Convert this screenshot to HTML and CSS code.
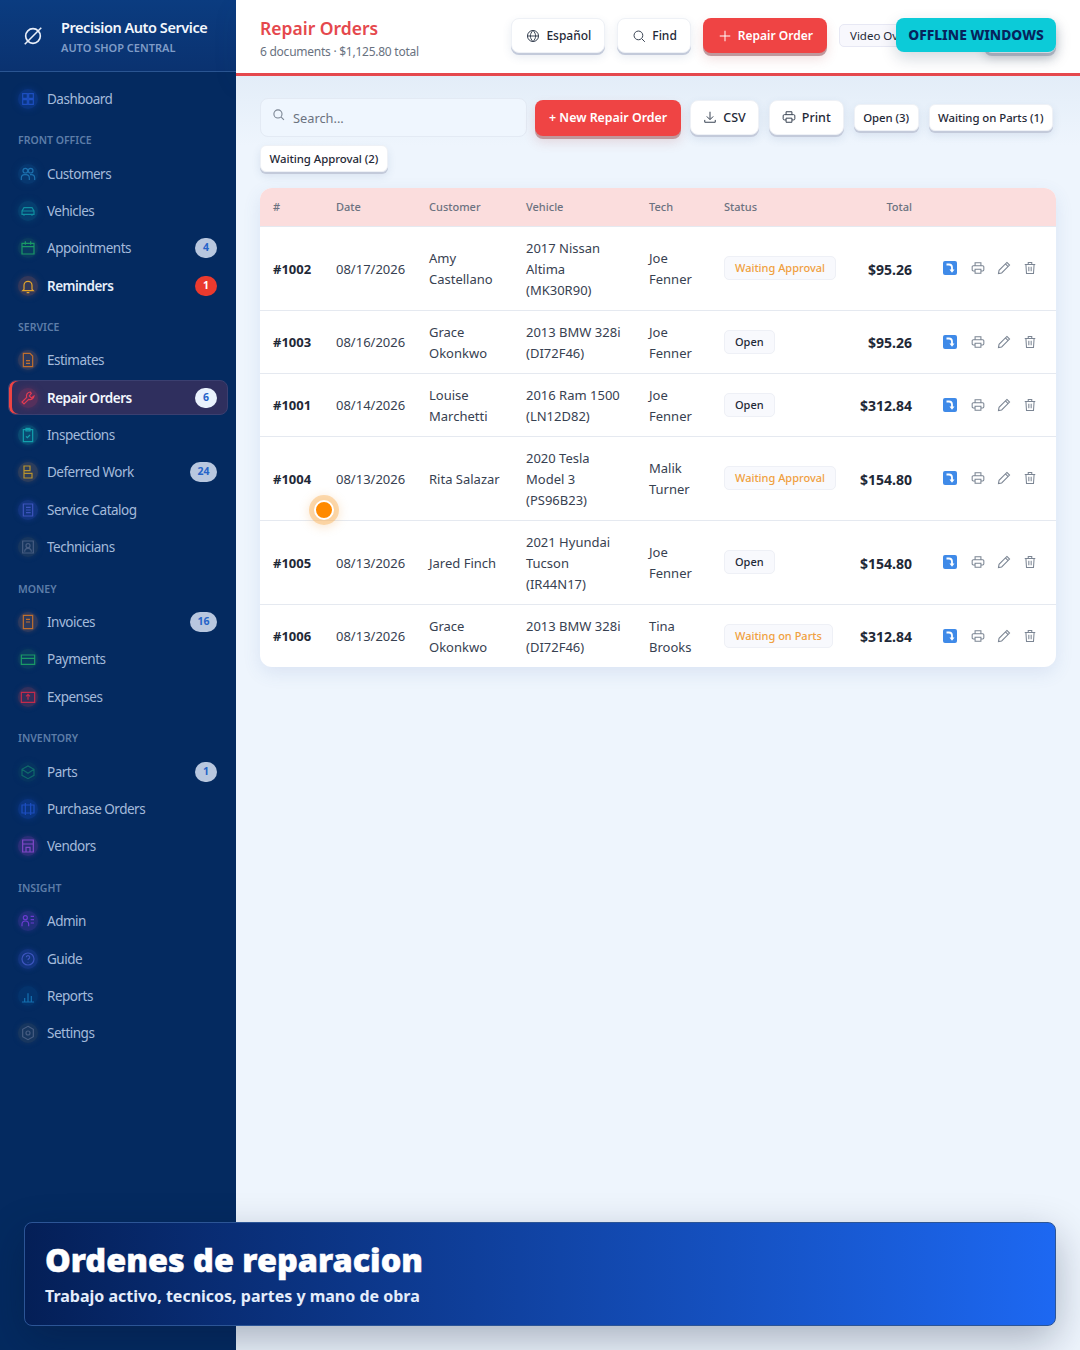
FILE: index.html
```html
<!DOCTYPE html>
<html lang="en">
<head>
  <meta charset="UTF-8">
  <title>Repair Orders</title>
  <link rel="stylesheet" href="styles.css">
</head>
<body>

  <svg class="defs" width="0" height="0">
    <symbol id="i-print" viewBox="0 0 24 24"><path d="M7 8V3h10v5M7 17H4a2 2 0 0 1-2-2v-5a2 2 0 0 1 2-2h16a2 2 0 0 1 2 2v5a2 2 0 0 1-2 2h-3M7 14h10v7H7z"/></symbol>
    <symbol id="i-pencil" viewBox="0 0 24 24"><path d="M17 2.500l4.500 4.500L8 20.500l-5.500 1 1-5.500zM14.500 5l4.500 4.500"/></symbol>
    <symbol id="i-trash" viewBox="0 0 24 24"><path d="M3 6h18M9 6V2.500h6V6M5 6l1 15.500h12L19 6M10 10v7.500M14 10v7.500"/></symbol>
    <symbol id="i-move" viewBox="0 0 14 14"><rect width="14" height="14" rx="2" fill="#3f8ae8" stroke="none"/><path d="M3.500 3.500h2.500a3 3 0 0 1 3 3v2.500" fill="none" stroke="#fff" stroke-width="1.800"/><path d="M6.500 8.500h5L9 11.800z" fill="#fff" stroke="none"/></symbol>
    <symbol id="i-search" viewBox="0 0 24 24"><circle cx="11" cy="11" r="7.500"/><path d="M17 17l5 5"/></symbol>
  </svg>

  <aside class="sidebar">
    <div class="brand">
      <svg class="brand-logo" viewBox="0 0 24 24"><circle cx="12" cy="12" r="8"/><path d="M3 21L21 3"/></svg>
      <div class="brand-text">
        <div class="brand-name">Precision Auto Service</div>
        <div class="brand-sub">AUTO SHOP CENTRAL</div>
      </div>
    </div>

    <nav class="nav">
      <a class="nav-item" href="#"><span class="nav-icon c-blue"><svg viewBox="0 0 24 24"><path d="M4 4h7v7H4zM13 4h7v7h-7zM4 13h7v7H4zM13 13h7v7h-7z"/></svg></span>Dashboard</a>

      <div class="nav-label">FRONT OFFICE</div>
      <a class="nav-item" href="#"><span class="nav-icon c-sky"><svg viewBox="0 0 24 24"><circle cx="8" cy="7" r="3.500"/><circle cx="16" cy="7" r="3.500"/><path d="M2 21v-3a5 5 0 0 1 5-5h2a5 5 0 0 1 5 5v3M15 13h2a5 5 0 0 1 5 5v3"/></svg></span>Customers</a>
      <a class="nav-item" href="#"><span class="nav-icon c-teal"><svg viewBox="0 0 24 24"><path d="M3 17v-5l3-5h12l3 5v5zM3 12h18M6 17v2M18 17v2"/></svg></span>Vehicles</a>
      <a class="nav-item" href="#"><span class="nav-icon c-green"><svg viewBox="0 0 24 24"><path d="M3 5h18v16H3zM3 10h18M8 2v5M16 2v5"/></svg></span>Appointments<span class="badge">4</span></a>
      <a class="nav-item is-bright" href="#"><span class="nav-icon c-amber"><svg viewBox="0 0 24 24"><path d="M6 17v-6a6 6 0 0 1 12 0v6l2 2H4zM10 22h4"/></svg></span>Reminders<span class="badge badge-red">1</span></a>

      <div class="nav-label">SERVICE</div>
      <a class="nav-item" href="#"><span class="nav-icon c-orange"><svg viewBox="0 0 24 24"><path d="M5 2h10l4 4v16H5zM9 13h6M9 17h6"/></svg></span>Estimates</a>
      <a class="nav-item is-active" href="#"><span class="nav-icon c-red"><svg viewBox="0 0 24 24"><path d="M15 3a6 6 0 0 0-5 8l-7 7 3 3 7-7a6 6 0 0 0 8-5l-4 3-3-3 3-4z"/></svg></span>Repair Orders<span class="badge badge-white">6</span></a>
      <a class="nav-item" href="#"><span class="nav-icon c-cyan"><svg viewBox="0 0 24 24"><path d="M5 4h14v18H5zM9 2h6v4H9zM9 14l2 2 4-4"/></svg></span>Inspections</a>
      <a class="nav-item" href="#"><span class="nav-icon c-yellow"><svg viewBox="0 0 24 24"><path d="M6 3h9v7H6zM6 10v11M6 14h12v7H6z"/></svg></span>Deferred Work<span class="badge">24</span></a>
      <a class="nav-item" href="#"><span class="nav-icon c-indigo"><svg viewBox="0 0 24 24"><path d="M5 3h14v18H5zM9 8h7M9 12h7M9 16h7"/></svg></span>Service Catalog</a>
      <a class="nav-item" href="#"><span class="nav-icon c-slate"><svg viewBox="0 0 24 24"><path d="M4 3h16v18H4z"/><circle cx="12" cy="10" r="3"/><path d="M7 19a5 5 0 0 1 10 0"/></svg></span>Technicians</a>

      <div class="nav-label">MONEY</div>
      <a class="nav-item" href="#"><span class="nav-icon c-orange"><svg viewBox="0 0 24 24"><path d="M5 2h14v20H5zM9 8h6M9 12h6"/></svg></span>Invoices<span class="badge">16</span></a>
      <a class="nav-item" href="#"><span class="nav-icon c-green"><svg viewBox="0 0 24 24"><path d="M2 6h20v14H2zM2 11h20"/></svg></span>Payments</a>
      <a class="nav-item" href="#"><span class="nav-icon c-rose"><svg viewBox="0 0 24 24"><path d="M2 5h20v15H2zM12 16V9M9 11l3-3 3 3"/></svg></span>Expenses</a>

      <div class="nav-label">INVENTORY</div>
      <a class="nav-item" href="#"><span class="nav-icon c-dimgreen"><svg viewBox="0 0 24 24"><path d="M3 8l9-5 9 5v9l-9 5-9-5zM3 8l9 6 9-6"/></svg></span>Parts<span class="badge">1</span></a>
      <a class="nav-item" href="#"><span class="nav-icon c-blue"><svg viewBox="0 0 24 24"><path d="M3 6h18v12H3zM8 3v18M16 3v18"/></svg></span>Purchase Orders</a>
      <a class="nav-item" href="#"><span class="nav-icon c-purple"><svg viewBox="0 0 24 24"><path d="M4 3h16v18H4zM4 9h16M9 21v-7h6v7"/></svg></span>Vendors</a>

      <div class="nav-label">INSIGHT</div>
      <a class="nav-item" href="#"><span class="nav-icon c-violet"><svg viewBox="0 0 24 24"><circle cx="8" cy="7" r="3"/><path d="M3 20v-3a5 5 0 0 1 10 0v3M16 5h5M16 10h5M16 15h5"/></svg></span>Admin</a>
      <a class="nav-item" href="#"><span class="nav-icon c-indigo"><svg viewBox="0 0 24 24"><circle cx="12" cy="12" r="9"/><path d="M9.500 9.500a2.500 2.500 0 1 1 3.500 2.300c-.7.4-1 1-1 1.700M12 17v.5"/></svg></span>Guide</a>
      <a class="nav-item" href="#"><span class="nav-icon c-skydim"><svg viewBox="0 0 24 24"><path d="M3 21h18M7 21v-6M12 21V8M17 21v-9"/></svg></span>Reports</a>
      <a class="nav-item" href="#"><span class="nav-icon c-slate"><svg viewBox="0 0 24 24"><path d="M12 2l8 4.500v11L12 22l-8-4.500v-11z"/><circle cx="12" cy="12" r="3"/></svg></span>Settings</a>
    </nav>
  </aside>

  <div class="page">
    <header class="topbar">
      <div class="title-block">
        <h1>Repair Orders</h1>
        <p>6 documents · $1,125.80 total</p>
      </div>
      <div class="top-actions">
        <button class="btn btn-top"><svg class="btn-icon" viewBox="0 0 24 24"><circle cx="12" cy="12" r="9.500"/><path d="M2.500 12h19M12 2.500c-6 6-6 13 0 19M12 2.500c6 6 6 13 0 19"/></svg>Español</button>
        <button class="btn btn-top"><svg class="btn-icon"><use href="#i-search"/></svg>Find</button>
        <button class="btn btn-top btn-red"><svg class="btn-icon" viewBox="0 0 24 24"><path d="M12 3v18M3 12h18"/></svg>Repair Order</button>
        <span class="video-chip">Video Overview</span>
        <button class="btn btn-hidden"></button>
      </div>
    </header>

    <main class="content">
      <div class="toolbar">
        <label class="search">
          <svg class="search-icon"><use href="#i-search"/></svg>
          <span>Search...</span>
        </label>
        <button class="btn btn-red btn-new">+ New Repair Order</button>
        <button class="btn btn-tool"><svg class="btn-icon" viewBox="0 0 24 24"><path d="M12 3v13M6.500 11l5.500 5.500 5.500-5.500M3 17v4h18v-4"/></svg>CSV</button>
        <button class="btn btn-tool"><svg class="btn-icon"><use href="#i-print"/></svg>Print</button>
        <button class="chip">Open (3)</button>
        <button class="chip">Waiting on Parts (1)</button>
        <button class="chip">Waiting Approval (2)</button>
      </div>

      <div class="table-card">
        <table class="orders">
          <colgroup>
            <col class="col-num"><col class="col-date"><col class="col-cust"><col class="col-veh">
            <col class="col-tech"><col class="col-status"><col class="col-total"><col class="col-act">
          </colgroup>
          <thead>
            <tr>
              <th>#</th><th>Date</th><th>Customer</th><th>Vehicle</th><th>Tech</th><th>Status</th><th class="right">Total</th><th></th>
            </tr>
          </thead>
          <tbody>
            <tr>
              <td class="num">#1002</td><td>08/17/2026</td><td>Amy Castellano</td><td>2017 Nissan Altima (MK30R90)</td><td>Joe Fenner</td>
              <td class="cell-up"><span class="status st-warn">Waiting Approval</span></td><td class="total">$95.26</td>
              <td class="cell-up"><div class="acts"><svg class="act-move"><use href="#i-move"/></svg><svg class="act"><use href="#i-print"/></svg><svg class="act"><use href="#i-pencil"/></svg><svg class="act"><use href="#i-trash"/></svg></div></td>
            </tr>
            <tr>
              <td class="num">#1003</td><td>08/16/2026</td><td>Grace Okonkwo</td><td>2013 BMW 328i (DI72F46)</td><td>Joe Fenner</td>
              <td class="cell-up"><span class="status">Open</span></td><td class="total">$95.26</td>
              <td class="cell-up"><div class="acts"><svg class="act-move"><use href="#i-move"/></svg><svg class="act"><use href="#i-print"/></svg><svg class="act"><use href="#i-pencil"/></svg><svg class="act"><use href="#i-trash"/></svg></div></td>
            </tr>
            <tr>
              <td class="num">#1001</td><td>08/14/2026</td><td>Louise Marchetti</td><td>2016 Ram 1500 (LN12D82)</td><td>Joe Fenner</td>
              <td class="cell-up"><span class="status">Open</span></td><td class="total">$312.84</td>
              <td class="cell-up"><div class="acts"><svg class="act-move"><use href="#i-move"/></svg><svg class="act"><use href="#i-print"/></svg><svg class="act"><use href="#i-pencil"/></svg><svg class="act"><use href="#i-trash"/></svg></div></td>
            </tr>
            <tr>
              <td class="num">#1004</td><td>08/13/2026</td><td>Rita Salazar</td><td>2020 Tesla Model 3 (PS96B23)</td><td>Malik Turner</td>
              <td class="cell-up"><span class="status st-warn">Waiting Approval</span></td><td class="total">$154.80</td>
              <td class="cell-up"><div class="acts"><svg class="act-move"><use href="#i-move"/></svg><svg class="act"><use href="#i-print"/></svg><svg class="act"><use href="#i-pencil"/></svg><svg class="act"><use href="#i-trash"/></svg></div></td>
            </tr>
            <tr>
              <td class="num">#1005</td><td>08/13/2026</td><td>Jared Finch</td><td>2021 Hyundai Tucson (IR44N17)</td><td>Joe Fenner</td>
              <td class="cell-up"><span class="status">Open</span></td><td class="total">$154.80</td>
              <td class="cell-up"><div class="acts"><svg class="act-move"><use href="#i-move"/></svg><svg class="act"><use href="#i-print"/></svg><svg class="act"><use href="#i-pencil"/></svg><svg class="act"><use href="#i-trash"/></svg></div></td>
            </tr>
            <tr>
              <td class="num">#1006</td><td>08/13/2026</td><td>Grace Okonkwo</td><td>2013 BMW 328i (DI72F46)</td><td>Tina Brooks</td>
              <td class="cell-up"><span class="status st-warn">Waiting on Parts</span></td><td class="total">$312.84</td>
              <td class="cell-up"><div class="acts"><svg class="act-move"><use href="#i-move"/></svg><svg class="act"><use href="#i-print"/></svg><svg class="act"><use href="#i-pencil"/></svg><svg class="act"><use href="#i-trash"/></svg></div></td>
            </tr>
          </tbody>
        </table>
      </div>
    </main>
  </div>

  <!-- overlays on top of the app -->
  <div class="offline-tag">OFFLINE WINDOWS</div>
  <div class="cursor-dot"></div>
  <div class="caption">
    <div class="caption-title">Ordenes de reparacion</div>
    <div class="caption-sub">Trabajo activo, tecnicos, partes y mano de obra</div>
  </div>

</body>
</html>
```

FILE: styles.css
```css
* {
  box-sizing: border-box;
}

body {
  margin: 0;
  height: 1350px;
  overflow: hidden;
  display: flex;
  position: relative;
  font-family: "Noto Sans", Arial, sans-serif;
  font-size: 13px;
  color: #1f2937;
  background: #eef5fd;
}

.defs {
  position: absolute;
}

/* sidebar */
.sidebar {
  width: 236px;
  flex-shrink: 0;
  background: #042a60;
}

.brand {
  height: 72px;
  display: flex;
  align-items: center;
  gap: 17px;
  padding-left: 22px;
  background: linear-gradient(180deg, #0b3c80, #0a3270);
  border-bottom: 1px solid #2a5592;
}

.brand-logo {
  width: 22px;
  height: 22px;
  fill: none;
  stroke: #e8eef8;
  stroke-width: 1.800;
}

.brand-text {
  padding-top: 1px;
}

.brand-name {
  color: #f3f7fd;
  font-size: 14.500px;
  font-weight: 600;
  letter-spacing: -0.450px;
  line-height: 20px;
}

.brand-sub {
  color: #7f9cc7;
  font-size: 11px;
  font-weight: 600;
  line-height: 16px;
  margin-top: 3px;
}

.nav {
  padding: 9px 8px 0;
  display: flex;
  flex-direction: column;
}

.nav-label {
  color: #5d7da8;
  font-size: 10.500px;
  font-weight: 600;
  line-height: 13px;
  padding: 16px 10px 8.600px;
}

.nav-item {
  height: 35.330px;
  margin-bottom: 2px;
  display: flex;
  align-items: center;
  gap: 9px;
  padding: 0 11px 0 10px;
  border-radius: 8px;
  color: #a4bbdb;
  font-size: 13.500px;
  letter-spacing: -0.500px;
  text-decoration: none;
}

.is-bright {
  color: #e6eefa;
  font-weight: 600;
}

.is-active {
  padding: 0 10px 0 9px;
  color: #f3f7fd;
  font-weight: 600;
  background: #2f2f5e;
  border: 1px solid #3b3f70;
  box-shadow: inset 3px 0 0 #ef4444;
}

.nav-icon {
  width: 20px;
  height: 20px;
  flex-shrink: 0;
  display: flex;
  align-items: center;
  justify-content: center;
  border-radius: 50%;
}

.nav-icon svg {
  width: 16px;
  height: 16px;
  fill: none;
  stroke: currentColor;
  stroke-width: 1.800;
}

.c-blue { color: #1d4fc0; background: #0a3580; box-shadow: 0 0 6px #0a3580; }
.c-sky { color: #1c70ae; background: #07376f; box-shadow: 0 0 6px #07376f; }
.c-teal { color: #0f8ea0; background: #063e6e; box-shadow: 0 0 6px #063e6e; }
.c-green { color: #1a9a66; background: #0a3a60; box-shadow: 0 0 4px #0a3a60; }
.c-amber { color: #e5a52a; background: #33385a; box-shadow: 0 0 6px #33385a; }
.c-orange { color: #c06f2e; background: #2d3a5e; box-shadow: 0 0 4px #2d3a5e; }
.c-red { color: #e23b52; background: #55305c; box-shadow: 0 0 6px #55305c; }
.c-cyan { color: #13a0ae; background: #0a4a72; box-shadow: 0 0 5px #0a4a72; }
.c-yellow { color: #b8932e; background: #2c3d5c; box-shadow: 0 0 5px #2c3d5c; }
.c-indigo { color: #3d55bd; background: #12357f; box-shadow: 0 0 5px #12357f; }
.c-slate { color: #475d82; background: #17365f; box-shadow: 0 0 5px #17365f; }
.c-rose { color: #c42a4c; background: #33305c; box-shadow: 0 0 5px #33305c; }
.c-dimgreen { color: #0f6a6a; background: #063360; box-shadow: 0 0 5px #063360; }
.c-purple { color: #8048c8; background: #2a2f78; box-shadow: 0 0 5px #2a2f78; }
.c-violet { color: #6a3cd0; background: #1f2f7a; box-shadow: 0 0 5px #1f2f7a; }
.c-skydim { color: #1470b0; background: #04336c; box-shadow: 0 0 5px #04336c; }

.badge {
  margin-left: auto;
  min-width: 22px;
  height: 20px;
  padding: 0 7.500px;
  border-radius: 10px;
  background: #b8c7df;
  color: #2563c9;
  font-size: 10.500px;
  font-weight: 700;
  letter-spacing: 0;
  line-height: 19px;
  text-align: center;
}

.badge-red {
  background: #ea3a2e;
  color: #fff;
}

.badge-white {
  background: #eaf2fd;
}

/* top bar */
.page {
  flex: 1;
  min-width: 0;
  display: flex;
  flex-direction: column;
}

.topbar {
  height: 76px;
  display: flex;
  align-items: flex-start;
  padding: 0 24px;
  background: #fff;
  border-bottom: 3px solid #e5484d;
  box-shadow: 0 8px 24px rgba(40, 80, 140, 0.080);
}

.title-block {
  flex: 1;
  padding-top: 15px;
}

h1 {
  margin: 0;
  color: #e5484d;
  font-size: 17.500px;
  font-weight: 600;
  line-height: 26px;
}

.title-block p {
  margin: 1px 0 0;
  color: #69727f;
  font-size: 12px;
  letter-spacing: -0.250px;
  line-height: 19px;
}

.top-actions {
  display: flex;
  align-items: center;
  gap: 12px;
  height: 35px;
  margin-top: 18px;
}

.btn {
  display: flex;
  align-items: center;
  gap: 7px;
  height: 34px;
  padding: 0 13px;
  border: 1px solid #eef1f6;
  border-radius: 8px;
  background: #fff;
  color: #1f2937;
  font-family: inherit;
  font-size: 12.500px;
  font-weight: 500;
  box-shadow: 0 2px 0 #c3cada, 0 4px 10px rgba(60, 90, 140, 0.120);
}

.btn-icon {
  width: 14px;
  height: 14px;
  fill: none;
  stroke: #374151;
  stroke-width: 1.700;
}

.btn-red {
  border: 0;
  background: #ef4444;
  color: #fff;
  font-weight: 600;
  box-shadow: 0 3px 0 #c0989c, 0 6px 12px rgba(180, 70, 70, 0.180);
}

.btn-red .btn-icon {
  stroke: #fff;
}

.btn-top {
  height: 35px;
  padding: 0 13px 0 14px;
  gap: 6px;
  font-size: 12px;
}

.btn-top.btn-red {
  padding: 0 14px 0 15px;
}

.video-chip {
  width: 133px;
  height: 23px;
  flex-shrink: 0;
  padding: 0 10px;
  border: 1px solid #e7e8f4;
  border-radius: 5px;
  background: #f8f8fd;
  font-size: 11.500px;
  line-height: 21px;
  white-space: nowrap;
  overflow: hidden;
}

.btn-hidden {
  width: 72px;
  flex-shrink: 0;
  box-shadow: 0 3px 0 #b6bcc8, 0 5px 10px rgba(60, 70, 90, 0.250);
}

/* toolbar */
.content {
  flex: 1;
  padding: 22px 24px 0;
  background: linear-gradient(180deg, #e3edf8, #eef5fd 70px);
}

.toolbar {
  display: flex;
  flex-wrap: wrap;
  align-items: center;
  gap: 8px 10px;
}

.search {
  width: 267px;
  height: 39px;
  margin-right: -2px;
  display: flex;
  align-items: center;
  gap: 8px;
  padding: 0 0 4px 11px;
  border: 1px solid #e3eaf4;
  border-radius: 8px;
  background: #eff6fe;
  color: #6b7280;
  font-size: 12.800px;
}

.search-icon {
  width: 13px;
  height: 13px;
  margin-bottom: 3px;
  fill: none;
  stroke: #7a8492;
  stroke-width: 2;
}

.search span {
  padding-top: 5px;
}

.btn-new {
  height: 36px;
  margin-right: -1px;
  padding: 0 14px;
  font-size: 12.400px;
}

.btn-tool {
  height: 35px;
  padding: 0 12px;
  gap: 6px;
  font-weight: 500;
  margin-bottom: 1px;
}

.chip {
  height: 27px;
  padding: 0 8.500px;
  border: 1px solid #eef1f6;
  border-radius: 6px;
  background: #fff;
  color: #1f2937;
  font-family: inherit;
  font-size: 11.400px;
  font-weight: 500;
  letter-spacing: -0.050px;
  box-shadow: 0 2px 0 #c3cada, 0 4px 8px rgba(60, 90, 140, 0.120);
}

/* table */
.table-card {
  margin-top: 16px;
  border-radius: 12px;
  overflow: hidden;
  background: #fff;
  box-shadow: 0 6px 18px rgba(70, 110, 170, 0.120);
}

.orders {
  width: 796px;
  table-layout: fixed;
  border-collapse: collapse;
}

.col-num { width: 64px; }
.col-date { width: 93px; }
.col-cust { width: 97px; }
.col-veh { width: 123px; }
.col-tech { width: 75px; }
.col-status { width: 142px; }
.col-total { width: 70px; }
.col-act { width: 132px; }

th {
  height: 38px;
  padding: 0 12px;
  background: #fbdddd;
  border-bottom: 1px solid #e5e9f0;
  color: #6b7280;
  font-size: 11px;
  font-weight: 500;
  text-align: left;
}

th:first-child,
td:first-child {
  padding-left: 13px;
}

th.right {
  text-align: right;
}

td {
  padding: 11px 12px 9px;
  border-bottom: 1px solid #e5e9f0;
  color: #374151;
  font-size: 13px;
  line-height: 21px;
}

td.cell-up {
  padding-top: 10px;
  padding-bottom: 10px;
}

tr:last-child td {
  border-bottom: 0;
}

.num {
  color: #1f2937;
  font-weight: 700;
}

.total {
  padding-left: 0;
  color: #1f2937;
  font-size: 14px;
  font-weight: 700;
  text-align: right;
  white-space: nowrap;
}

.status {
  display: inline-block;
  height: 24px;
  padding: 0 10px;
  border: 1px solid #eef0f6;
  border-radius: 5px;
  background: #f8f9fd;
  color: #1f2937;
  font-size: 11px;
  font-weight: 500;
  line-height: 22px;
  white-space: nowrap;
}

.st-warn {
  color: #f0a040;
}

.acts {
  display: flex;
  align-items: center;
  gap: 12px;
  padding-left: 7px;
}

.act-move {
  width: 14px;
  height: 14px;
  margin-right: 2px;
}

.act {
  width: 14px;
  height: 14px;
  fill: none;
  stroke: #7b8593;
  stroke-width: 1.800;
}

/* overlays */
.offline-tag {
  position: absolute;
  left: 896px;
  top: 18px;
  width: 160px;
  height: 34px;
  border-radius: 8px;
  background: #0ccbd8;
  color: #06245c;
  font-size: 13.800px;
  font-weight: 800;
  line-height: 34px;
  text-align: center;
  box-shadow: 0 6px 16px rgba(10, 40, 70, 0.180);
}

.cursor-dot {
  position: absolute;
  left: 313.500px;
  top: 499.500px;
  width: 20px;
  height: 20px;
  border: 2.500px solid #fff;
  border-radius: 50%;
  background: #ff8a00;
  box-shadow: 0 0 0 5px rgba(250, 180, 90, 0.450), 0 2px 10px 6px rgba(240, 170, 90, 0.250);
}

.caption {
  position: absolute;
  left: 24px;
  top: 1222px;
  width: 1032px;
  height: 104px;
  padding: 14px 20px;
  border: 1px solid #2c5596;
  border-radius: 8px;
  background: linear-gradient(90deg, #041f57, #1d68f2);
  box-shadow: 0 14px 40px rgba(5, 20, 50, 0.300);
}

.caption-title {
  color: #fff;
  font-size: 32.400px;
  font-weight: 900;
  line-height: 44px;
  -webkit-text-stroke: 0.500px #fff;
}

.caption-sub {
  margin-top: 3px;
  color: #e4edfb;
  font-size: 16px;
  font-weight: 700;
  line-height: 24px;
}
```
